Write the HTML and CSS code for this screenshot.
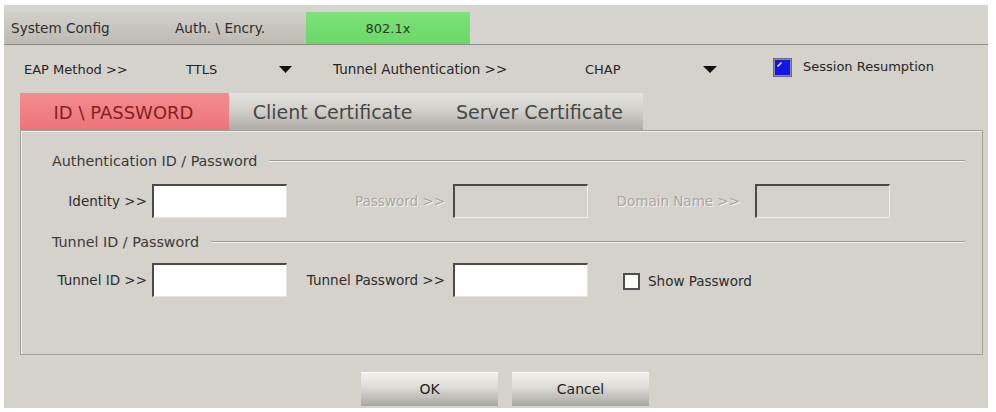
FILE: index.html
```html
<!DOCTYPE html>
<html>
<head>
<meta charset="utf-8">
<link rel="stylesheet" href="styles.css">
</head>
<body>
<div class="dialog">
  <div class="topbar">
    <div class="maintab t1">System Config</div>
    <div class="maintab t2">Auth. \ Encry.</div>
    <div class="maintab t3">802.1x</div>
    <div class="barfill"></div>
  </div>

  <div class="eaprow">
    <span class="c-eap">EAP Method &gt;&gt;</span>
    <span class="c-ttls">TTLS</span>
    <span class="c-arrow1"><svg width="13" height="7" viewBox="0 0 13 7"><path d="M0 0 H13 L6.5 7 Z" fill="#111"/></svg></span>
    <span class="c-tunnel">Tunnel Authentication &gt;&gt;</span>
    <span class="c-chap">CHAP</span>
    <span class="c-arrow2"><svg width="14" height="7" viewBox="0 0 14 7"><path d="M0 0 H14 L7 7 Z" fill="#111"/></svg></span>
    <span class="c-check"><svg width="19" height="19" viewBox="0 0 19 19"><rect x="0.5" y="0.5" width="18" height="18" fill="#8c8ca0" stroke="#6a6a7a"/><rect x="2" y="2" width="15" height="15" fill="#1414e6"/><path d="M4.5 8.5 L8.5 4.5" stroke="#e8e8ff" stroke-width="1.6"/></svg></span>
    <span class="c-session">Session Resumption</span>
  </div>

  <div class="subtabs">
    <div class="subtab active">ID \ PASSWORD</div>
    <div class="subtab">Client Certificate</div>
    <div class="subtab">Server Certificate</div>
  </div>

  <div class="panel">
    <div class="group"><span class="glabel">Authentication ID / Password</span><span class="gline"></span></div>
    <div class="fields r1">
      <label class="lbl">Identity &gt;&gt;</label>
      <div class="input"></div>
      <label class="lbl l2 disabled">Password &gt;&gt;</label>
      <div class="input off"></div>
      <label class="lbl l3 disabled">Domain Name &gt;&gt;</label>
      <div class="input off"></div>
    </div>
    <div class="group g2"><span class="glabel">Tunnel ID / Password</span><span class="gline"></span></div>
    <div class="fields r2">
      <label class="lbl">Tunnel ID &gt;&gt;</label>
      <div class="input"></div>
      <label class="lbl l2">Tunnel Password &gt;&gt;</label>
      <div class="input"></div>
      <div class="showpw"><span class="box"></span><span>Show Password</span></div>
    </div>
  </div>

  <div class="buttons">
    <div class="btn ok">OK</div>
    <div class="btn cancel">Cancel</div>
  </div>
</div>
</body>
</html>
```

FILE: styles.css
```css
html, body {
  margin: 0;
  padding: 0;
  background: #ffffff;
}
body {
  font-family: "DejaVu Sans", "Liberation Sans", sans-serif;
  font-size: 13px;
  color: #2a2a2a;
}
.dialog {
  margin: 5px 0 0 4px;
  width: 984px;
  height: 403px;
  background: #d5d2cc;
  display: flex;
  flex-direction: column;
}
.topbar {
  display: flex;
  padding-top: 7px;
  height: 32px;
  border-bottom: 1px solid #8e8b86;
  background: #d6d4cf;
}
.maintab {
  height: 32px;
  line-height: 33px;
  font-size: 13.6px;
  color: #2e2e2e;
  background: linear-gradient(#d2d0ca, #bdbab3);
  white-space: nowrap;
}
.t1 { width: 151px; padding-left: 7px; box-sizing: border-box; }
.t2 { width: 151px; padding-left: 20px; box-sizing: border-box; }
.t3 {
  width: 164px;
  text-align: center;
  font-size: 13px;
  background: linear-gradient(#7ee27a, #69d866);
  color: #2a3a2a;
}
.barfill { flex: 1; }

.eaprow {
  display: flex;
  align-items: center;
  height: 48px;
  padding-left: 20px;
  font-size: 13px;
  color: #262626;
  white-space: nowrap;
}
.eaprow > span { display: flex; align-items: center; }
.c-eap { width: 162px; }
.c-ttls { width: 93px; }
.c-arrow1 { width: 54px; padding-top: 1px; }
.c-tunnel { width: 252px; font-size: 13.5px; }
.c-chap { width: 118px; }
.c-arrow2 { width: 70px; padding-top: 1px; }
.c-check { width: 30px; margin-top: -3px; }
.c-session { margin-top: -6px; }

.subtabs {
  display: flex;
  padding-left: 16px;
  height: 37px;
}
.subtab {
  width: 207px;
  height: 37px;
  line-height: 39px;
  text-align: center;
  font-size: 19px;
  color: #474747;
  white-space: nowrap;
  background: linear-gradient(#e4e2de 0%, #d3d1cc 45%, #aeaba6 100%);
}
.subtab.active {
  width: 209px;
  font-size: 18px;
  padding-right: 2px;
  box-sizing: border-box;
  background: linear-gradient(#f48c90, #ec7479);
  color: #861e22;
}

.panel {
  margin-left: 16px;
  width: 963px;
  height: 225px;
  box-sizing: border-box;
  border: 1px solid #a29f99;
  box-shadow: inset 1px 1px 0 #efede9;
  padding: 22px 17px 0 0;
}
.group {
  display: flex;
  align-items: center;
  height: 16px;
  padding-left: 31px;
  font-size: 14.3px;
  color: #3a3a3a;
}
.glabel { white-space: nowrap; }
.gline {
  flex: 1;
  margin-left: 12px;
  height: 0;
  border-top: 1px solid #9f9c97;
  border-bottom: 1px solid #f2f0ec;
}
.g2 { margin-top: 16px; }
.fields {
  display: grid;
  grid-template-columns: 131px 135px 166px 135px 167px 135px;
  align-items: center;
  height: 34px;
  margin-top: 15px;
}
.fields.r2 { margin-top: 13px; }
.lbl {
  text-align: right;
  padding-right: 5px;
  font-size: 13.5px;
  color: #2c2c2c;
  white-space: nowrap;
}
.lbl.l2 { padding-right: 8px; }
.lbl.l3 { padding-right: 15px; }
.lbl.disabled {
  color: #a9a7a3;
  text-shadow: 1px 1px 0 #f4f3f0;
}
.input {
  height: 34px;
  box-sizing: border-box;
  background: #ffffff;
  border-top: 2px solid #4a4a48;
  border-left: 2px solid #4a4a48;
  border-right: 1px solid #e6e4e0;
  border-bottom: 1px solid #e6e4e0;
}
.input.off { background: #d5d2cc; border-right-color: #f0eeea; border-bottom-color: #f0eeea; }
.showpw {
  grid-column: 5 / 7;
  display: flex;
  align-items: center;
  padding-left: 35px;
  font-size: 13.5px;
  color: #2c2c2c;
  padding-top: 2px;
}
.showpw .box {
  width: 17px;
  height: 17px;
  box-sizing: border-box;
  border: 2px solid #4e4e4e;
  background: #fbfbfa;
  margin-right: 8px;
}

.buttons {
  display: flex;
  padding-left: 357px;
  margin-top: 17px;
  gap: 14px;
}
.btn {
  width: 137px;
  height: 34px;
  line-height: 34px;
  text-align: center;
  font-size: 14px;
  color: #222;
  background: linear-gradient(#f3f2ef 0%, #dddbd7 45%, #a9a7a2 100%);
  box-shadow: inset 0 1px 0 #fafafa;
}
```
